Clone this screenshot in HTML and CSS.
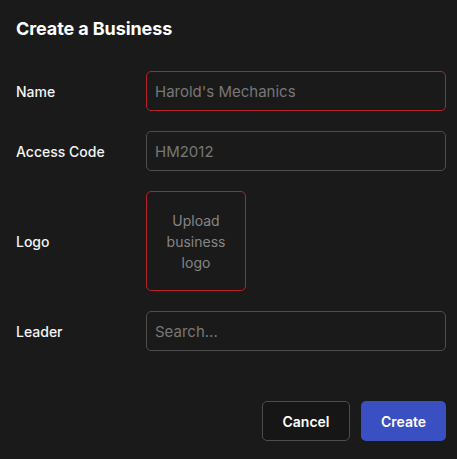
FILE: index.html
```html
<!DOCTYPE html>
<html>
<head>
<meta charset="utf-8">
<link rel="stylesheet" href="styles.css">
</head>
<body>
<div class="dialog">
  <h1 class="title">Create a Business</h1>
  <div class="form">
    <div class="row">
      <label class="label">Name</label>
      <div class="input error">Harold's Mechanics</div>
    </div>
    <div class="row">
      <label class="label">Access Code</label>
      <div class="input">HM2012</div>
    </div>
    <div class="row">
      <label class="label">Logo</label>
      <div class="upload">Upload business logo</div>
    </div>
    <div class="row">
      <label class="label">Leader</label>
      <div class="input">Search...</div>
    </div>
  </div>
  <div class="actions">
    <button class="btn cancel">Cancel</button>
    <button class="btn create">Create</button>
  </div>
</div>
</body>
</html>
```
FILE: styles.css
```css
html, body {
  margin: 0;
  padding: 0;
  background: #1a1a1a;
  font-family: Inter, "Noto Sans", sans-serif;
}
.dialog {
  width: 430px;
  padding: 16px 0 0 16px;
}
.title {
  margin: 0;
  font-size: 18px;
  line-height: 26px;
  font-weight: 700;
  color: #ffffff;
  letter-spacing: -0.1px;
}
.form {
  margin-top: 29px;
  display: flex;
  flex-direction: column;
  gap: 20px;
}
.row {
  display: flex;
  align-items: center;
}
.label {
  width: 130px;
  font-size: 14px;
  font-weight: 500;
  color: #f4f4f4;
}
.input {
  box-sizing: border-box;
  width: 300px;
  height: 40px;
  border: 1px solid #4d4d4d;
  border-radius: 5px;
  padding: 0 8px;
  display: flex;
  align-items: center;
  font-size: 15px;
  color: #777777;
}
.input.error {
  border-color: #b3212b;
}
.upload {
  box-sizing: border-box;
  width: 100px;
  height: 100px;
  border: 1px solid #b3212b;
  border-radius: 5px;
  display: flex;
  align-items: center;
  justify-content: center;
  text-align: center;
  padding: 0 14px;
  font-size: 14px;
  line-height: 21px;
  color: #858585;
}
.actions {
  margin-top: 50px;
  width: 430px;
  display: flex;
  justify-content: flex-end;
  gap: 11px;
}
.btn {
  box-sizing: border-box;
  height: 40px;
  border-radius: 5px;
  font-family: Inter, "Noto Sans", sans-serif;
  font-size: 14px;
  font-weight: 600;
  color: #ffffff;
}
.cancel {
  width: 88px;
  background: #161616;
  border: 1px solid #4d4d4d;
}
.create {
  width: 85px;
  background: #3a4fc2;
  border: none;
}
```
